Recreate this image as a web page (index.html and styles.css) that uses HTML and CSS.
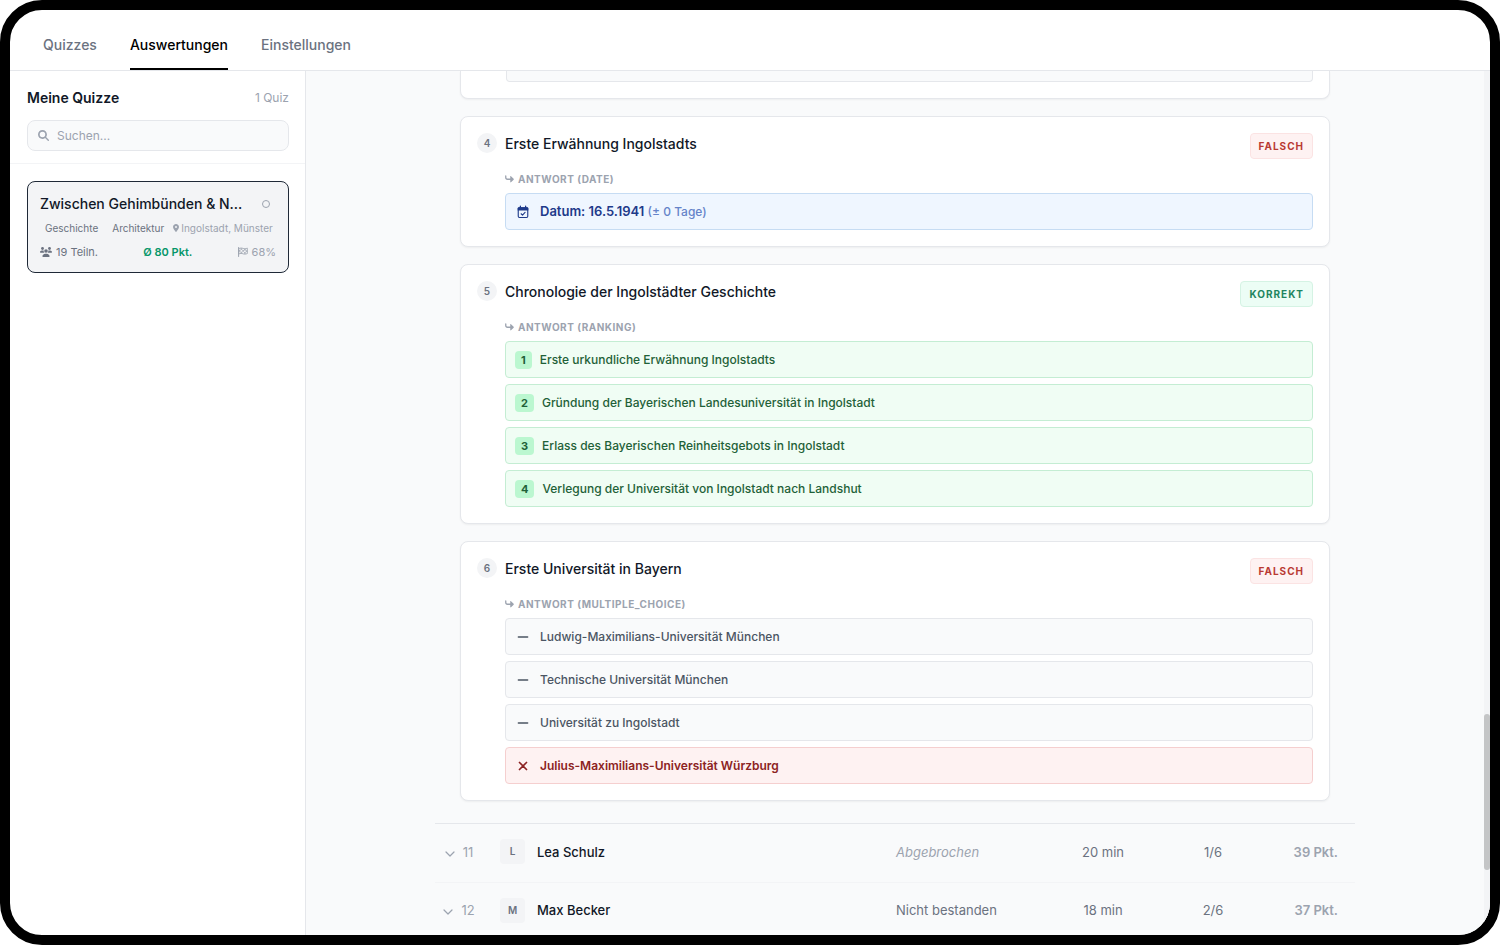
FILE: index.html
```html
<!DOCTYPE html>
<html lang="de">
<head>
<meta charset="utf-8">
<meta name="viewport" content="width=device-width, initial-scale=1">
<title>Auswertungen</title>
<link rel="stylesheet" href="styles.css">
</head>
<body>
<svg class="sprite" aria-hidden="true">
  <symbol id="search" viewBox="0 0 512 512"><path d="M416 208c0 45.9-14.9 88.3-40 122.7L502.6 457.4c12.5 12.5 12.5 32.8 0 45.3s-32.8 12.5-45.3 0L330.7 376c-34.4 25.2-76.8 40-122.7 40C93.1 416 0 322.9 0 208S93.1 0 208 0S416 93.1 416 208zM208 336a128 128 0 1 0 0-256 128 128 0 1 0 0 256z"/></symbol>
  <symbol id="pin" viewBox="0 0 384 512"><path d="M215.7 499.2C267 435 384 279.4 384 192C384 86 298 0 192 0S0 86 0 192c0 87.4 117 243 168.3 307.2c12.3 15.3 35.1 15.3 47.4 0zM192 128a64 64 0 1 1 0 128 64 64 0 1 1 0-128z"/></symbol>
  <symbol id="users" viewBox="0 0 24 20"><circle cx="5" cy="3" r="2.8"/><circle cx="19" cy="3" r="2.8"/><circle cx="12" cy="8" r="3.6"/><path d="M0 10.600C0 8.400 1.600 7 3.600 7h2.600c.4 0 .8.100 1.200.2C7.200 9 7.600 10.400 8.800 11.600H1c-.6 0-1-.4-1-1zM24 10.600C24 8.400 22.400 7 20.400 7h-2.600c-.4 0-.8.100-1.200.2.2 1.800-.2 3.200-1.400 4.400H23c.6 0 1-.4 1-1zM5 18.800C5 15.500 7.400 13.300 10.300 13.300h3.400c2.900 0 5.300 2.200 5.300 5.500 0 .7-.5 1.200-1.200 1.200H6.200C5.500 20 5 19.500 5 18.800z"/></symbol>
  <symbol id="flag" viewBox="0 0 20 20"><path d="M1.200 1v18" fill="none" stroke="currentColor" stroke-width="2" stroke-linecap="round"/><path d="M1.500 3.200C5 1.800 7.500 1.800 10 2.800s5 1 8.700-.5v10.800c-3.700 1.500-6.200 1.500-8.700.5s-5-1-8.500.4z" fill="none" stroke="currentColor" stroke-width="1.600"/><path d="M5 2.500h3.500v3.600H5zM12 3.500h3.500v3.500H12zM8.500 6.100H12v3.600H8.500zM15.500 6.500h3V10h-3zM5 9.500h3.500V13H5zM12 9.900h3.500v3.600H12zM1.500 6h3.500v3.500H1.500z" opacity=".75"/></symbol>
  <symbol id="reply" viewBox="0 0 18 16"><path d="M1.500 2v3.200c0 2.100 1.200 3.300 3.300 3.300H12" fill="none" stroke="currentColor" stroke-width="2.600" stroke-linecap="round"/><path d="M10.500 3v11c0 .8.900 1.200 1.500.6l5.300-5.200c.5-.5.5-1.300 0-1.800L12 2.400c-.6-.6-1.500-.2-1.500.6z"/></symbol>
  <symbol id="calendar" viewBox="0 0 14 15"><path d="M4.200 1.300v2M9.800 1.300v2" stroke="currentColor" stroke-width="1.400" stroke-linecap="round"/><rect x="1.900" y="3" width="10.200" height="10.400" rx="1.300" fill="none" stroke="currentColor" stroke-width="1.200"/><path d="M1.300 3.600c0-.7.500-1.200 1.200-1.200h9c.7 0 1.200.5 1.200 1.200v2.200H1.300z"/><path d="M5 9.400l1.500 1.400L9.200 8" fill="none" stroke="currentColor" stroke-width="1.200" stroke-linecap="round" stroke-linejoin="round"/></symbol>
  <symbol id="minus" viewBox="0 0 14 14"><path d="M2.400 7h9.200" stroke="currentColor" stroke-width="1.500" stroke-linecap="round"/></symbol>
  <symbol id="cross" viewBox="0 0 14 14"><path d="M3.500 3.500l7 7m0-7l-7 7" stroke="currentColor" stroke-width="1.700" stroke-linecap="round"/></symbol>
  <symbol id="chevron" viewBox="0 0 10 10"><path d="M1 3l4 4 4-4" fill="none" stroke="currentColor" stroke-width="1.200" stroke-linecap="round" stroke-linejoin="round"/></symbol>
</svg>
<div class="window">
  <nav class="tabs">
    <a class="tab" href="#quizzes">Quizzes</a>
    <a class="tab active" href="#auswertungen" aria-current="page">Auswertungen</a>
    <a class="tab" href="#einstellungen">Einstellungen</a>
  </nav>
  <div class="body">
    <aside class="sidebar">
      <div class="sidebar-head">
        <div class="sidebar-title"><h2>Meine Quizze</h2><span>1 Quiz</span></div>
        <label class="search"><svg class="search-icon" aria-hidden="true"><use href="#search"/></svg><input type="search" placeholder="Suchen..." aria-label="Suchen"></label>
      </div>
      <div class="quiz-list">
        <button class="quiz" type="button">
          <span class="quiz-title"><span>Zwischen Gehimbünden &amp; N...</span><span class="ring"></span></span>
          <span class="tags"><span class="tag">Geschichte</span><span class="tag">Architektur</span><span class="place"><svg class="pin" aria-hidden="true"><use href="#pin"/></svg>Ingolstadt, Münster</span></span>
          <span class="stats">
            <span class="stat"><svg class="users" aria-hidden="true"><use href="#users"/></svg>19 Teiln.</span>
            <span class="stat points">Ø 80 Pkt.</span>
            <span class="stat quota"><svg class="flag" aria-hidden="true"><use href="#flag"/></svg>68%</span>
          </span>
        </button>
      </div>
    </aside>
    <main class="main">
      <div class="content">
        <div class="cards">
          <section class="card cut"><div class="answer-cut"></div></section>

          <section class="card">
            <span class="number">4</span>
            <div class="question">
              <header class="card-head"><h3>Erste Erwähnung Ingolstadts</h3><span class="badge wrong">Falsch</span></header>
              <p class="kind"><svg class="reply" aria-hidden="true"><use href="#reply"/></svg>Antwort (DATE)</p>
              <ul class="answers">
                <li class="answer date"><svg class="icon" aria-hidden="true"><use href="#calendar"/></svg><span><strong>Datum: 16.5.1941</strong> <span class="tolerance">(± 0 Tage)</span></span></li>
              </ul>
            </div>
          </section>

          <section class="card">
            <span class="number">5</span>
            <div class="question">
              <header class="card-head"><h3>Chronologie der Ingolstädter Geschichte</h3><span class="badge right">Korrekt</span></header>
              <p class="kind"><svg class="reply" aria-hidden="true"><use href="#reply"/></svg>Antwort (RANKING)</p>
              <ol class="answers">
                <li class="answer good"><span class="rank">1</span>Erste urkundliche Erwähnung Ingolstadts</li>
                <li class="answer good"><span class="rank">2</span>Gründung der Bayerischen Landesuniversität in Ingolstadt</li>
                <li class="answer good"><span class="rank">3</span>Erlass des Bayerischen Reinheitsgebots in Ingolstadt</li>
                <li class="answer good"><span class="rank">4</span>Verlegung der Universität von Ingolstadt nach Landshut</li>
              </ol>
            </div>
          </section>

          <section class="card">
            <span class="number">6</span>
            <div class="question">
              <header class="card-head"><h3>Erste Universität in Bayern</h3><span class="badge wrong">Falsch</span></header>
              <p class="kind"><svg class="reply" aria-hidden="true"><use href="#reply"/></svg>Antwort (MULTIPLE_CHOICE)</p>
              <ul class="answers">
                <li class="answer"><svg class="icon" aria-hidden="true"><use href="#minus"/></svg>Ludwig-Maximilians-Universität München</li>
                <li class="answer"><svg class="icon" aria-hidden="true"><use href="#minus"/></svg>Technische Universität München</li>
                <li class="answer"><svg class="icon" aria-hidden="true"><use href="#minus"/></svg>Universität zu Ingolstadt</li>
                <li class="answer bad"><svg class="icon" aria-hidden="true"><use href="#cross"/></svg>Julius-Maximilians-Universität Würzburg</li>
              </ul>
            </div>
          </section>
        </div>

        <table class="people">
          <colgroup><col class="c-rank"><col><col class="c-status"><col class="c-time"><col class="c-score"><col class="c-points"></colgroup>
          <tbody>
            <tr>
              <td class="rank-cell"><svg class="chevron" aria-hidden="true"><use href="#chevron"/></svg>11</td>
              <td><div class="person"><span class="avatar">L</span>Lea Schulz</div></td>
              <td class="aborted">Abgebrochen</td><td class="mid">20 min</td><td class="mid">1/6</td><td class="total">39 Pkt.</td>
            </tr>
            <tr>
              <td class="rank-cell"><svg class="chevron" aria-hidden="true"><use href="#chevron"/></svg>12</td>
              <td><div class="person"><span class="avatar">M</span>Max Becker</div></td>
              <td>Nicht bestanden</td><td class="mid">18 min</td><td class="mid">2/6</td><td class="total">37 Pkt.</td>
            </tr>
          </tbody>
        </table>
      </div>
      <div class="track" aria-hidden="true"><div class="thumb"></div></div>
    </main>
  </div>
</div>
</body>
</html>
```

FILE: styles.css
```css
* { box-sizing: border-box; }
body {
  margin: 0;
  background: #fff;
  color: #111827;
  font-family: Inter, "Liberation Sans", sans-serif;
  font-size: 13px;
  line-height: 20px;
}
h2, h3, p, ul, ol { margin: 0; padding: 0; }
ul, ol { list-style: none; }
svg { flex: none; fill: currentColor; }
.sprite { position: absolute; width: 0; height: 0; }

.window {
  display: flex;
  flex-direction: column;
  height: 100vh;
  border: 10px solid #000;
  border-radius: 42px;
  overflow: hidden;
}

.tabs {
  display: flex;
  flex: none;
  gap: 33px;
  padding: 0 33px;
  border-bottom: 1px solid #e5e7eb;
}
.tab {
  padding: 25px 0 13px;
  border-bottom: 2px solid transparent;
  color: #6b7280;
  font-size: 14px;
  font-weight: 500;
  text-decoration: none;
}
.tab.active { color: #000; border-color: #000; }

.body { display: flex; flex: 1; min-height: 0; }

.sidebar { flex: none; width: 296px; border-right: 1px solid #e5e7eb; }
.sidebar-head { padding: 17px 16px 12px 17px; border-bottom: 1px solid #f3f4f6; }
.sidebar-title { display: flex; justify-content: space-between; align-items: center; margin-bottom: 12px; }
.sidebar-title h2 { font-size: 14px; font-weight: 600; }
.sidebar-title span { color: #9ca3af; font-size: 12px; }
.search {
  display: flex;
  align-items: center;
  gap: 8px;
  height: 31px;
  padding: 0 10px;
  border: 1px solid #e5e7eb;
  border-radius: 8px;
  background: #f9fafb;
  color: #9ca3af;
}
.search-icon { width: 11px; height: 11px; }
.search input {
  flex: 1;
  min-width: 0;
  padding: 0;
  border: 0;
  outline: 0;
  background: none;
  font: inherit;
  font-size: 12px;
}
.search input::placeholder { color: #9ca3af; opacity: 1; }
.quiz-list { padding: 17px 16px 17px 17px; }
.quiz {
  display: flex;
  flex-direction: column;
  width: 100%;
  padding: 12px 12px 10px;
  border: 1px solid #1f2937;
  border-radius: 8px;
  background: #f3f4f6;
  color: #6b7280;
  font: inherit;
  text-align: left;
}
.quiz-title { display: flex; align-items: center; justify-content: space-between; padding-right: 6px; color: #111827; font-size: 14px; font-weight: 500; }
.ring { width: 8px; height: 8px; border: 1px solid #9ca3af; border-radius: 50%; }
.tags { display: flex; align-items: center; gap: 4px; margin: 4px 0; font-size: 10px; white-space: nowrap; }
.tag { padding: 0 5px; }
.place { display: flex; align-items: center; gap: 2px; color: #9ca3af; }
.pin { width: 6px; height: 8px; }
.stats { display: flex; justify-content: space-between; font-size: 11px; }
.stat { display: flex; align-items: center; gap: 4px; }
.points { color: #059669; font-weight: 600; }
.quota { color: #9ca3af; }
.users { width: 12px; height: 10px; }
.flag { width: 10px; height: 10px; }

.main {
  position: relative;
  flex: 1;
  min-width: 0;
  padding-right: 6px;
  overflow: hidden;
  background: #f9fafb;
}
.content { max-width: 920px; margin: 0 auto; }
.cards { display: flex; flex-direction: column; gap: 17px; padding: 0 25px 22px; border-bottom: 1px solid #e5e7eb; }
.card {
  display: flex;
  gap: 8px;
  padding: 16px;
  border: 1px solid #e5e7eb;
  border-radius: 8px;
  background: #fff;
  box-shadow: 0 1px 2px rgba(0, 0, 0, .05);
}
.card.cut { padding: 0 16px 16px 45px; border-top: 0; border-radius: 0 0 8px 8px; }
.answer-cut { flex: 1; height: 11px; border: 1px solid #e5e7eb; border-top: 0; border-radius: 0 0 4px 4px; background: #f9fafb; }
.number {
  flex: none;
  width: 20px;
  height: 20px;
  border-radius: 50%;
  background: #f3f4f6;
  color: #6b7280;
  font-size: 10px;
  font-weight: 600;
  line-height: 20px;
  text-align: center;
}
.question { flex: 1; min-width: 0; }
.card-head { display: flex; justify-content: space-between; align-items: flex-start; }
.card-head h3 { font-size: 14px; font-weight: 500; line-height: 22px; }
.badge {
  padding: 3px 8px;
  border: 1px solid;
  border-radius: 4px;
  font-size: 10px;
  font-weight: 700;
  line-height: 18px;
  letter-spacing: 1px;
  text-transform: uppercase;
}
.wrong { color: #b93a32; background: #fef2f2; border-color: #fbe3e3; }
.right { color: #1f8560; background: #ecfdf5; border-color: #d5f3e4; }
.kind {
  display: flex;
  align-items: center;
  gap: 4px;
  margin: 12px 0 6px;
  color: #9ca3af;
  font-size: 10px;
  font-weight: 700;
  line-height: 16px;
  letter-spacing: .05em;
  text-transform: uppercase;
}
.reply { width: 9px; height: 8px; }
.answers { display: flex; flex-direction: column; gap: 6px; }
.answer {
  display: flex;
  align-items: center;
  gap: 10px;
  min-height: 37px;
  padding: 0 10px;
  border: 1px solid #e5e7eb;
  border-radius: 4px;
  background: #f9fafb;
  color: #4b5563;
  font-size: 12px;
  font-weight: 500;
}
.icon { width: 14px; height: 14px; }
.date { color: #1e3a8a; background: #eff6ff; border-color: #c6dcf3; }
.date strong { font-size: 13px; font-weight: 600; }
.tolerance { color: #6583c9; }
.good { gap: 8px; padding: 0 9px; color: #1f6138; background: #f0fdf4; border-color: #c4edd3; }
.bad { color: #8c2323; background: #fef2f2; border-color: #f5cfcf; font-weight: 600; }
.rank { padding: 0 6px; border-radius: 4px; background: #bbf7d0; color: #1f6138; font-size: 11px; font-weight: 700; line-height: 18px; }

.people { width: 100%; table-layout: fixed; border-collapse: collapse; color: #6b7280; }
.people td { height: 58px; padding: 0 17px 2px; border-bottom: 1px solid #f3f4f6; white-space: nowrap; }
.c-rank { width: 48px; }
.c-status { width: 173px; }
.c-time { width: 102px; }
.c-score { width: 118px; }
.c-points { width: 83px; }
.people .rank-cell { padding: 0 0 2px; color: #9ca3af; text-align: center; }
.chevron { width: 10px; height: 10px; margin-right: 8px; vertical-align: -2px; }
.person { display: flex; align-items: center; gap: 12px; color: #111827; font-weight: 500; }
.avatar { width: 25px; height: 25px; border-radius: 4px; background: #f3f4f6; color: #6b7280; font-size: 10px; font-weight: 600; line-height: 25px; text-align: center; }
.people .aborted { color: #9ca3af; font-style: italic; }
.people .mid { padding: 0 0 2px; text-align: center; }
.people .total { padding-left: 0; color: #9ca3af; font-weight: 600; text-align: right; }

.track { position: absolute; top: 0; right: 0; bottom: 0; width: 6px; background: #f3f4f6; }
.thumb { height: 18%; margin-top: 643px; border-radius: 3px; background: #c4c5c6; }
```
